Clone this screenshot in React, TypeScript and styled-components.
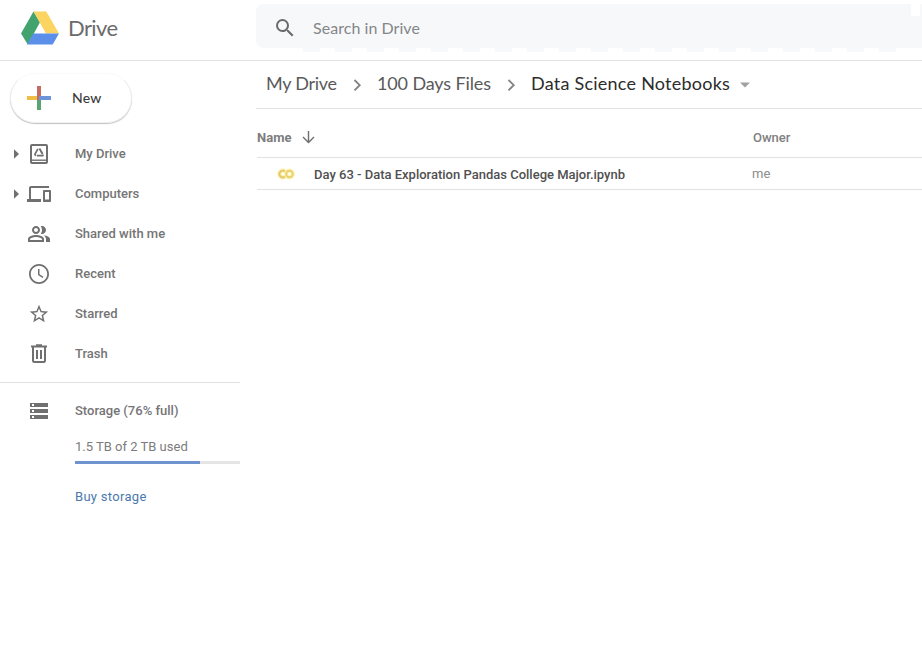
import React from "react";
import styled, { createGlobalStyle } from "styled-components";

const Global = createGlobalStyle`
  * { box-sizing: border-box; }
  html, body { margin: 0; background: #fff; }
  body { font-family: Roboto, "Liberation Sans", sans-serif; overflow: hidden; }
  svg { display: block; flex: none; }
`;

const Page = styled.div`
  width: 922px;
  height: 666px;
  overflow: hidden;
  background: #fff;
`;

const Header = styled.header`
  display: flex;
  height: 61px;
  border-bottom: 1px solid #e2e2e2;
`;

const Brand = styled.div`
  display: flex;
  width: 256px;
  padding: 10px 0 0 20px;
  gap: 8px;
`;

const BrandName = styled.span`
  font: 400 22px/36px Lato, sans-serif;
  letter-spacing: -0.6px;
  color: #6b6b6b;
`;

const SearchArea = styled.div`
  flex: 1;
  padding-top: 4px;
`;

const SearchBox = styled.div`
  display: flex;
  align-items: center;
  height: 44px;
  padding: 4px 0 0 17px;
  border-radius: 8px 0 0 8px;
  background: linear-gradient(#fff, #fff) right 2px top 0 / 9px 12px no-repeat #f7f8fa;
`;

const SearchEdge = styled.div`
  height: 4px;
  width: 593px;
  margin-left: 47px;
  background: repeating-linear-gradient(to right, #f7f8fa 0 17px, #fff 17px 32px);
`;

const SearchText = styled.span`
  margin-left: 16px;
  font: 400 16px/24px Lato, sans-serif;
  letter-spacing: 0.05px;
  color: #858688;
`;

const Body = styled.div`
  display: flex;
`;

const Sidebar = styled.aside`
  width: 240px;
`;

const NewButton = styled.button`
  display: flex;
  align-items: center;
  width: 122px;
  height: 50px;
  margin: 12px 0 11px 10px;
  padding: 0 0 0 16px;
  gap: 21px;
  border: 1px solid #efefef;
  border-top-color: #fafafa;
  border-radius: 25px;
  background: #fff;
  box-shadow: 0 1px 1px rgba(0, 0, 0, 0.24);
  color: #3c3c3c;
  font: 500 14px/20px Lato, sans-serif;
  letter-spacing: 0.2px;
`;

const NavRow = styled.div`
  display: flex;
  align-items: center;
  height: 40px;
  padding-left: 13px;
`;

const Expander = styled.span`
  width: 14px;
`;

const Label = styled.span`
  margin-left: 24px;
  font-size: 13px;
  font-weight: 500;
  line-height: 20px;
  color: #757575;
`;

const StorageSection = styled.section`
  margin-top: 8px;
  padding-top: 8px;
  border-top: 1px solid #e2e2e2;
`;

const StorageDetails = styled.div`
  display: flex;
  flex-direction: column;
  padding-left: 75px;
  font-size: 13px;
  line-height: 20px;
`;

const Usage = styled.span`
  margin-top: 6px;
  color: #7c7c7c;
`;

const Meter = styled.div`
  height: 3px;
  margin-top: 4px;
  background: #e5e5e5;
`;

const MeterFill = styled.div`
  width: 125px;
  height: 3px;
  background: #6f93cf;
`;

const BuyLink = styled.a`
  margin-top: 23px;
  font-weight: 400;
  letter-spacing: 0.3px;
  color: #4a7aad;
`;

const Main = styled.main`
  flex: 1;
  padding-left: 16px;
`;

const Crumbs = styled.nav`
  display: flex;
  align-items: center;
  height: 48px;
  padding-left: 10px;
  border-bottom: 1px solid #e2e2e2;
`;

const Crumb = styled.span<{ $width: number; $spacing: number; $current?: boolean }>`
  width: ${(p) => p.$width}px;
  padding-bottom: 3px;
  font: 400 18px/24px Lato, sans-serif;
  letter-spacing: ${(p) => p.$spacing}px;
  white-space: nowrap;
  color: ${(p) => (p.$current ? "#2c2c2c" : "#5a5a5a")};
`;

const Sep = styled.span`
  display: flex;
  justify-content: center;
  width: 40px;
`;

const TableRow = styled.div<{ $height: number }>`
  display: grid;
  grid-template-columns: 495px 1fr;
  align-items: center;
  height: ${(p) => p.$height}px;
  margin-left: 1px;
  border-bottom: 1px solid #e2e2e2;
  font-size: 13px;
  line-height: 20px;
`;

const NameHead = styled.div`
  display: flex;
  align-items: center;
  gap: 10px;
  padding-top: 9px;
  font-weight: 700;
  color: #7d7d7d;

  svg { margin-bottom: 2px; }
`;

const OwnerHead = styled.div`
  padding: 9px 0 0 1px;
  font-weight: 500;
  color: #808080;
`;

const FileCell = styled.div`
  display: flex;
  align-items: center;
  padding: 2px 0 0 20px;
  gap: 19px;
  font-weight: 500;
  color: #505050;

  svg { margin-bottom: 1px; }
`;

const Owner = styled.div`
  color: #8c8c8c;
`;

const GREY = "#707070";

const Material = ({ d, size = 24, color = GREY }: { d: string; size?: number; color?: string }) => (
  <svg width={size} height={size} viewBox="0 0 24 24" fill={color}>
    <path d={d} />
  </svg>
);

const DriveLogo = () => (
  <svg width="40" height="36" viewBox="0 0 40 36">
    <path d="M13.5 1.5 20 12.3 7.8 34.5 1 23.5Z" fill="#42a36e" />
    <path d="M13.5 1.5H26.3L39 23.5H26Z" fill="#fcd462" />
    <path d="M13.2 23.5H39L32.7 34.5H7Z" fill="#5c8fea" />
  </svg>
);

const Plus = () => (
  <svg width="24" height="24" viewBox="0 0 24 24">
    <path d="M10 0h4v10h-4z" fill="#c86a62" />
    <path d="M0 10h10v4H0z" fill="#efbd45" />
    <path d="M12 10h12v4H12z" fill="#6d94d8" />
    <path d="M10 10h2v4h-2z" fill="#c86a62" />
    <path d="M10 14h4v10h-4z" fill="#58a473" />
  </svg>
);

const MyDriveIcon = () => (
  <svg width="24" height="24" viewBox="0 0 24 24" fill="none" stroke={GREY}>
    <rect x="4" y="3" width="16" height="18" rx="1" strokeWidth="2" />
    <path d="M4 18.2h16" strokeWidth="1.4" />
    <path d="M10.9 6.8 7.9 12.3l.9 1.600" strokeWidth="1.700" />
    <path d="M12.400 6.500l3.200 5.400" strokeWidth="1.900" />
    <path d="M9.900 13.700h5.800l.7-1.100" strokeWidth="1.700" />
  </svg>
);

const TrashIcon = () => (
  <svg width="24" height="24" viewBox="0 0 24 24" fill="none" stroke={GREY} strokeWidth="2">
    <path d="M4 4.5h16M9 3.3h6M6 5v13.5A1.5 1.5 0 0 0 7.5 20h9a1.5 1.5 0 0 0 1.5-1.5V5M10 8v9M14 8v9" />
  </svg>
);

const DownArrow = () => (
  <svg width="14" height="14" viewBox="0 0 14 14" fill="none" stroke="#6e6e6e" strokeWidth="1.4">
    <path d="M7.5 1v11.3M2 7 7.5 12.4 13 7" />
  </svg>
);

const Chevron = () => (
  <svg width="12" height="14" viewBox="0 0 12 14" fill="none" stroke="#858585" strokeWidth="1.9">
    <path d="M3.5 2 8.7 7.2 3.5 12.4" />
  </svg>
);

const ColabIcon = () => (
  <svg width="18" height="12" viewBox="0 0 18 12" fill="none">
    <path d="M7.9 3.5A3.3 3.3 0 1 0 7.9 8.5" stroke="#fff3b0" strokeWidth="4.4" />
    <circle cx="12.5" cy="6" r="3.3" stroke="#fff3b0" strokeWidth="4.2" />
    <path d="M7.9 3.5A3.3 3.3 0 1 0 7.9 8.5" stroke="#e3c86c" strokeWidth="1.9" />
    <circle cx="12.5" cy="6" r="3.3" stroke="#e9d072" strokeWidth="1.9" />
  </svg>
);

const Triangle = () => (
  <svg width="7" height="10" viewBox="0 0 7 10">
    <path d="M1 .3 6 5 1 9.7Z" fill={GREY} />
  </svg>
);

const Caret = () => (
  <svg width="10" height="6" viewBox="0 0 10 6">
    <path d="M0 .5h10L5 5.5Z" fill="#a0a0a0" />
  </svg>
);

const paths = {
  search:
    "M15.5 14h-.79l-.28-.27A6.471 6.471 0 0 0 16 9.5 6.5 6.5 0 1 0 9.5 16c1.61 0 3.09-.59 4.23-1.57l.27.28v.79l5 4.99L20.49 19l-4.99-5zm-6 0C7.01 14 5 11.99 5 9.5S7.01 5 9.5 5 14 7.01 14 9.5 11.99 14 9.5 14z",
  devices:
    "M4 6h18V4H4c-1.1 0-2 .9-2 2v11H0v3h14v-3H4V6zm19 2h-6c-.55 0-1 .45-1 1v10c0 .55.45 1 1 1h6c.55 0 1-.45 1-1V9c0-.55-.45-1-1-1zm-1 9.5h-4v-7.5h4v7.5z",
  people:
    "M16.67 13.13C18.04 14.06 19 15.32 19 17v3h4v-3c0-2.18-3.57-3.47-6.33-3.87zM15 12c2.21 0 4-1.79 4-4s-1.79-4-4-4c-.47 0-.91.1-1.33.24C14.5 5.27 15 6.58 15 8s-.5 2.73-1.33 3.76c.42.14.86.24 1.33.24zM9 12c2.21 0 4-1.79 4-4s-1.79-4-4-4-4 1.79-4 4 1.79 4 4 4zm0-6c1.1 0 2 .9 2 2s-.9 2-2 2-2-.9-2-2 .9-2 2-2zm0 7c-2.67 0-8 1.34-8 4v3h16v-3c0-2.66-5.33-4-8-4zm6 5H3v-.99C3.2 16.29 6.3 15 9 15s5.8 1.29 6 2v1z",
  clock:
    "M12 2C6.5 2 2 6.5 2 12s4.5 10 10 10 10-4.5 10-10S17.5 2 12 2zm0 18.2c-4.53 0-8.2-3.67-8.2-8.2S7.47 3.8 12 3.8s8.2 3.67 8.2 8.2-3.67 8.2-8.2 8.2zM12.5 7H11v6l4.7 2.9.8-1.23-4-2.4V7z",
  star:
    "M22 9.24l-7.19-.62L12 2 9.19 8.63 2 9.24l5.46 4.73L5.82 21 12 17.27 18.18 21l-1.63-7.03L22 9.24zM12 15.4l-3.76 2.27 1-4.28-3.32-2.88 4.38-.38L12 6.1l1.71 4.04 4.38.38-3.32 2.88 1 4.28L12 15.4z",
  storage: "M3 20h18v-4H3v4zm2-3h2v2H5v-2zM3 4v4h18V4H3zm4 3H5V5h2v2zm-4 7h18v-4H3v4zm2-3h2v2H5v-2z",
};

const navItems = [
  { label: "My Drive", icon: <MyDriveIcon />, expandable: true },
  { label: "Computers", icon: <Material d={paths.devices} />, expandable: true },
  { label: "Shared with me", icon: <Material d={paths.people} /> },
  { label: "Recent", icon: <Material d={paths.clock} /> },
  { label: "Starred", icon: <Material d={paths.star} size={22} /> },
  { label: "Trash", icon: <TrashIcon /> },
];

const IconSlot = styled.span`
  display: flex;
  justify-content: center;
  width: 24px;
`;

export default function App() {
  return (
    <Page>
      <Global />
      <Header>
        <Brand>
          <DriveLogo />
          <BrandName>Drive</BrandName>
        </Brand>
        <SearchArea>
          <SearchBox>
            <Material d={paths.search} color="#6a6a6a" />
            <SearchText>Search in Drive</SearchText>
          </SearchBox>
          <SearchEdge />
        </SearchArea>
      </Header>
      <Body>
        <Sidebar>
          <NewButton>
            <Plus />
            New
          </NewButton>
          {navItems.map((item) => (
            <NavRow key={item.label}>
              <Expander>{item.expandable && <Triangle />}</Expander>
              <IconSlot>{item.icon}</IconSlot>
              <Label>{item.label}</Label>
            </NavRow>
          ))}
          <StorageSection>
            <NavRow>
              <Expander />
              <IconSlot>
                <Material d={paths.storage} />
              </IconSlot>
              <Label>Storage (76% full)</Label>
            </NavRow>
            <StorageDetails>
              <Usage>1.5 TB of 2 TB used</Usage>
              <Meter>
                <MeterFill />
              </Meter>
              <BuyLink>Buy storage</BuyLink>
            </StorageDetails>
          </StorageSection>
        </Sidebar>
        <Main>
          <Crumbs>
            <Crumb $width={71} $spacing={-0.25}>My Drive</Crumb>
            <Sep>
              <Chevron />
            </Sep>
            <Crumb $width={114} $spacing={-0.13}>100 Days Files</Crumb>
            <Sep>
              <Chevron />
            </Sep>
            <Crumb $width={209} $spacing={0.24} $current>
              Data Science Notebooks
            </Crumb>
            <Caret />
          </Crumbs>
          <TableRow $height={49}>
            <NameHead>
              Name
              <DownArrow />
            </NameHead>
            <OwnerHead>Owner</OwnerHead>
          </TableRow>
          <TableRow $height={32}>
            <FileCell>
              <ColabIcon />
              Day 63 - Data Exploration Pandas College Major.ipynb
            </FileCell>
            <Owner>me</Owner>
          </TableRow>
        </Main>
      </Body>
    </Page>
  );
}
